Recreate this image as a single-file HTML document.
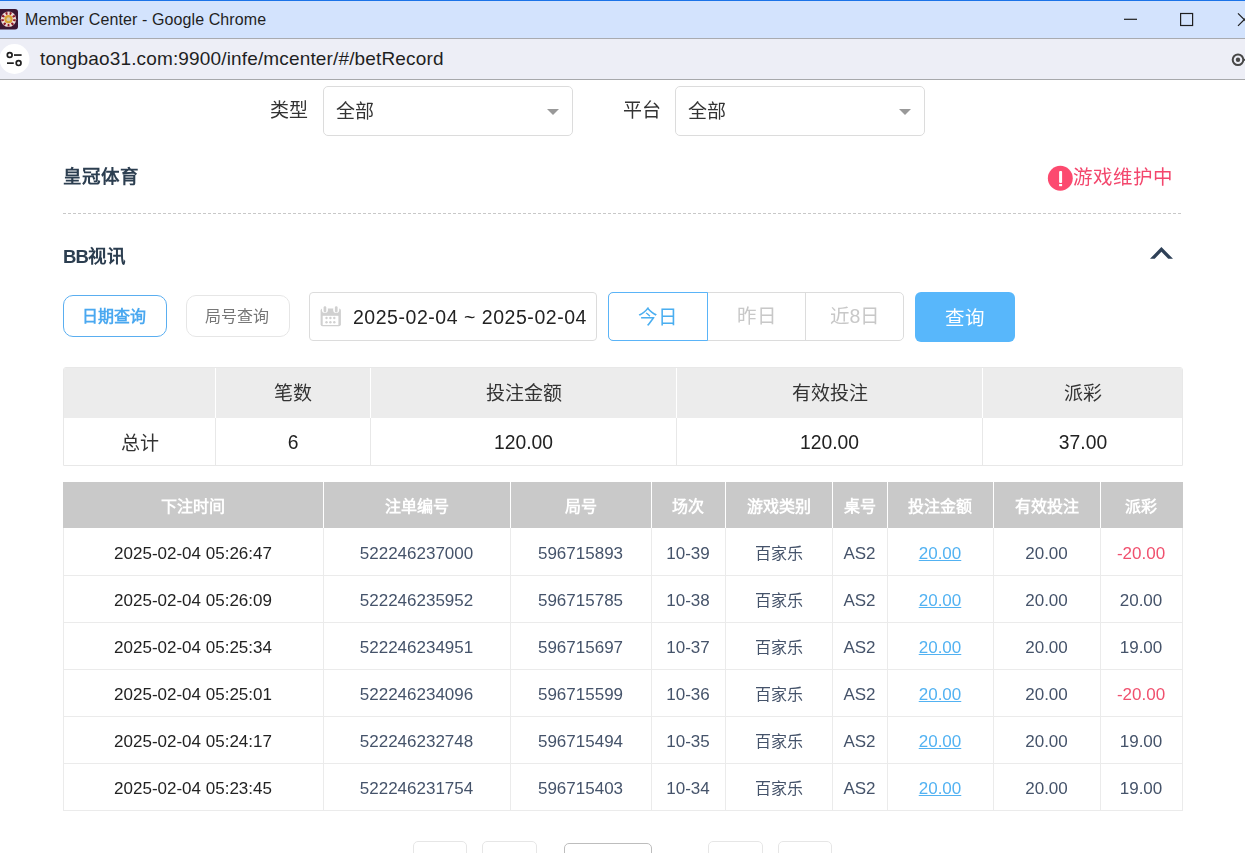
<!DOCTYPE html>
<html lang="zh-CN">
<head>
<meta charset="utf-8">
<style>
*{box-sizing:border-box;margin:0;padding:0}
html,body{width:1245px;height:853px;overflow:hidden;background:#fff;font-family:"Liberation Sans",sans-serif;color:#222}
.abs{position:absolute}
#title{position:absolute;left:0;top:0;width:1245px;height:39px;background:#d3e3fd;border-top:1px solid #1a73e8;border-bottom:1px solid #a9abb0}
#addr{position:absolute;left:0;top:39px;width:1245px;height:41px;background:#edeef6;border-bottom:1px solid #a7a8ab}
.t{position:absolute;white-space:nowrap;line-height:1}
#content{position:absolute;left:0;top:0;width:1245px;height:853px;will-change:transform}
.sel{position:absolute;top:86px;width:250px;height:50px;border:1px solid #dcdcdc;border-radius:5px}
.caret{position:absolute;width:0;height:0;border-left:6px solid transparent;border-right:6px solid transparent;border-top:6.5px solid #999}
.dash{position:absolute;left:63px;top:213px;width:1120px;height:1px;background:repeating-linear-gradient(90deg,#c8c8c8 0 3px,transparent 3px 5px)}
.btn{position:absolute;top:295px;height:42px;width:104px;border-radius:10px;text-align:center;line-height:42.5px;font-size:16px;padding-right:2px}
.seg{position:absolute;top:292px;height:49px;text-align:center;line-height:48px;font-size:19.5px;color:#c8c8c8}
.sum{position:absolute;left:63px;top:367px;width:1120px;height:99px;border:1px solid #e8e8e8;border-radius:3px 3px 0 0;overflow:hidden}
.sh{position:absolute;top:0;height:50px;line-height:51px;text-align:center;font-size:19px;color:#333}
.sd{position:absolute;top:50px;height:49px;line-height:50px;text-align:center;font-size:19.3px;color:#222}
.sd.cj{font-size:19px;line-height:51px;color:#333}
.th{position:absolute;top:482px;height:46px;line-height:49px;text-align:center;font-size:16px;font-weight:bold;color:#fff}
.td{position:absolute;height:47px;line-height:52px;text-align:center;font-size:17px;color:#45536a}
.td.c0{color:#222}
.td.lnk{color:#52b2f2;text-decoration:underline}
.td.neg{color:#f0506e}
.pg{position:absolute;top:841px;height:30px;border:1px solid #e6e6e6;border-radius:5px}
</style>
</head>
<body>
<div id="title">
  <svg class="abs" style="left:0;top:8px" width="19" height="21" viewBox="0 0 19 21">
    <rect x="-4" y="0" width="22" height="20.5" rx="3" fill="#3b1632"/>
    <circle cx="8.5" cy="10.2" r="7.7" fill="#ecdcd6"/>
    <circle cx="8.5" cy="10.2" r="6" fill="none" stroke="#901826" stroke-width="2.6" stroke-dasharray="1.9 2.2"/>
    <circle cx="8.5" cy="10.2" r="4.1" fill="#d9a232"/>
    <circle cx="8.5" cy="10.2" r="2" fill="#d6c8a6"/>
  </svg>
  <div class="t" style="left:25px;top:11px;font-size:16px;letter-spacing:0.1px;color:#1f1f1f">Member Center - Google Chrome</div>
  <svg class="abs" style="left:1120px;top:9px" width="125" height="19" viewBox="0 0 125 19">
    <rect x="4" y="8.7" width="13" height="1.2" fill="#1f1f1f"/>
    <rect x="60.6" y="3.5" width="12" height="12" fill="none" stroke="#1f1f1f" stroke-width="1.2"/>
    <path d="M118 3.3 L130.5 15.8 M118 15.8 L130.5 3.3" fill="none" stroke="#1f1f1f" stroke-width="1.2"/>
  </svg>
</div>
<div id="addr">
  <svg class="abs" style="left:0;top:5px" width="32" height="32" viewBox="0 0 32 32">
    <circle cx="14.5" cy="15" r="15" fill="#fff"/>
    <circle cx="9.7" cy="11" r="2.4" fill="none" stroke="#1f1f1f" stroke-width="1.7"/>
    <rect x="14" y="10.2" width="7.6" height="1.7" fill="#1f1f1f"/>
    <rect x="7" y="18.3" width="6.8" height="1.7" fill="#1f1f1f"/>
    <circle cx="18.6" cy="19.1" r="2.4" fill="none" stroke="#1f1f1f" stroke-width="1.7"/>
  </svg>
  <div class="t" style="left:40px;top:10px;font-size:19px;letter-spacing:0.15px;color:#1f1f1f">tongbao31.com:9900/infe/mcenter/#/betRecord</div>
  <svg class="abs" style="left:1228px;top:11px" width="17" height="20" viewBox="0 0 17 20">
    <circle cx="10" cy="9.8" r="5.3" fill="none" stroke="#474747" stroke-width="2"/>
    <circle cx="10" cy="9.8" r="2.2" fill="#474747"/>
    <rect x="15" y="8.8" width="3" height="2" fill="#474747"/>
  </svg>
</div>

<div id="content">
<div class="t" style="left:270px;top:101px;font-size:19px;color:#333">类型</div>
<div class="sel" style="left:323px"><div class="t" style="left:12px;top:15px;font-size:19px;color:#333">全部</div><div class="caret" style="left:223px;top:22px"></div></div>
<div class="t" style="left:622.5px;top:101px;font-size:19px;color:#333">平台</div>
<div class="sel" style="left:675px"><div class="t" style="left:12px;top:15px;font-size:19px;color:#333">全部</div><div class="caret" style="left:223px;top:22px"></div></div>

<div class="t" style="left:63px;top:167.5px;font-size:18.5px;font-weight:bold;color:#2c3e50">皇冠体育</div>
<svg class="abs" style="left:1044px;top:162px" width="32" height="32" viewBox="0 0 32 32">
  <circle cx="16.3" cy="16.3" r="12.45" fill="#fc4a6f"/>
  <rect x="15.1" y="9.1" width="3" height="12" rx="1" fill="#fff"/>
  <rect x="15.1" y="22" width="3" height="2.2" fill="#fff"/>
</svg>
<div class="t" style="left:1073px;top:168px;font-size:19.5px;color:#f3476d">游戏维护中</div>
<div class="dash"></div>

<div class="t" style="left:63px;top:247.5px;font-size:18.5px;font-weight:bold;color:#2c3e50"><span style="letter-spacing:-0.9px">BB</span>视讯</div>
<svg class="abs" style="left:1145px;top:240px" width="32" height="22" viewBox="0 0 32 22"><path d="M5 18.8 L16.4 7 L28 18.8 L23.2 18.8 L16.4 11.7 L9.7 18.8 Z" fill="#2e4057"/></svg>

<div class="btn" style="left:63px;border:1px solid #5aaef0;color:#4aa8f0;font-weight:bold">日期查询</div>
<div class="btn" style="left:186px;border:1px solid #e6e6e6;color:#777">局号查询</div>

<div class="abs" style="left:309px;top:292px;width:288px;height:49px;border:1px solid #dcdcdc;border-radius:4px"></div>
<svg class="abs" style="left:320px;top:306px" width="21" height="21" viewBox="0 0 21 21">
  <rect x="0.6" y="2.4" width="20.3" height="17.9" rx="2" fill="#d0d0d0"/>
  <rect x="2.7" y="9.8" width="15.7" height="9.2" fill="#fff"/>
  <rect x="1.9" y="0" width="6" height="7" rx="3" fill="#fff"/>
  <rect x="13.2" y="0" width="6" height="7" rx="3" fill="#fff"/>
  <rect x="3.6" y="0.2" width="2.7" height="6.2" rx="1.3" fill="#d0d0d0"/>
  <rect x="14.9" y="0.2" width="2.7" height="6.2" rx="1.3" fill="#d0d0d0"/>
  <g fill="#d0d0d0"><circle cx="6.5" cy="12" r="1.2"/><circle cx="10.4" cy="12" r="1.2"/><circle cx="14.3" cy="12" r="1.2"/><circle cx="6.5" cy="16.3" r="1.2"/><circle cx="10.4" cy="16.3" r="1.2"/><circle cx="14.3" cy="16.3" r="1.2"/></g>
</svg>
<div class="t" style="left:353px;top:308px;font-size:19.5px;letter-spacing:0.53px;color:#222">2025-02-04 ~ 2025-02-04</div>

<div class="abs" style="left:608px;top:292px;width:296px;height:49px;border:1px solid #dcdcdc;border-radius:5px"></div>
<div class="seg" style="left:608px;width:100px;border:1px solid #5ab4f8;border-radius:5px 0 0 5px;color:#4aaef0">今日</div>
<div class="seg" style="left:707px;width:99px">昨日</div>
<div class="abs" style="left:805px;top:292px;width:1px;height:49px;background:#dcdcdc"></div>
<div class="seg" style="left:806px;width:98px">近8日</div>
<div class="abs" style="left:915px;top:292px;width:100px;height:50px;border-radius:6px;background:#58b7fb;color:#fff;text-align:center;line-height:52px;font-size:19.5px">查询</div>

<div class="sum">
  <div class="abs" style="left:0;top:0;width:1120px;height:50px;background:#ececec"></div>
  <div class="abs" style="left:151px;top:0;width:1px;height:50px;background:#fff"></div>
  <div class="abs" style="left:306px;top:0;width:1px;height:50px;background:#fff"></div>
  <div class="abs" style="left:612px;top:0;width:1px;height:50px;background:#fff"></div>
  <div class="abs" style="left:918px;top:0;width:1px;height:50px;background:#fff"></div>
  <div class="abs" style="left:151px;top:50px;width:1px;height:49px;background:#e8e8e8"></div>
  <div class="abs" style="left:306px;top:50px;width:1px;height:49px;background:#e8e8e8"></div>
  <div class="abs" style="left:612px;top:50px;width:1px;height:49px;background:#e8e8e8"></div>
  <div class="abs" style="left:918px;top:50px;width:1px;height:49px;background:#e8e8e8"></div>
  <div class="sh" style="left:152px;width:154px">笔数</div>
  <div class="sh" style="left:307px;width:305px">投注金额</div>
  <div class="sh" style="left:613px;width:305px">有效投注</div>
  <div class="sh" style="left:919px;width:200px">派彩</div>
  <div class="sd cj" style="left:0;width:151px">总计</div>
  <div class="sd" style="left:152px;width:154px">6</div>
  <div class="sd" style="left:307px;width:305px">120.00</div>
  <div class="sd" style="left:613px;width:305px">120.00</div>
  <div class="sd" style="left:919px;width:200px">37.00</div>
</div>
<div class="abs" style="left:63px;top:482px;width:1120px;height:46px;background:#c9c9c9"></div>
<div class="th" style="left:63px;width:260px">下注时间</div>
<div class="th" style="left:323px;width:187px">注单编号</div>
<div class="th" style="left:510px;width:141px">局号</div>
<div class="th" style="left:651px;width:74px">场次</div>
<div class="th" style="left:725px;width:107px">游戏类别</div>
<div class="th" style="left:832px;width:55px">桌号</div>
<div class="th" style="left:887px;width:106px">投注金额</div>
<div class="th" style="left:993px;width:107px">有效投注</div>
<div class="th" style="left:1100px;width:82px">派彩</div>
<div class="abs" style="left:323px;top:482px;width:1px;height:46px;background:#fff"></div>
<div class="abs" style="left:510px;top:482px;width:1px;height:46px;background:#fff"></div>
<div class="abs" style="left:651px;top:482px;width:1px;height:46px;background:#fff"></div>
<div class="abs" style="left:725px;top:482px;width:1px;height:46px;background:#fff"></div>
<div class="abs" style="left:832px;top:482px;width:1px;height:46px;background:#fff"></div>
<div class="abs" style="left:887px;top:482px;width:1px;height:46px;background:#fff"></div>
<div class="abs" style="left:993px;top:482px;width:1px;height:46px;background:#fff"></div>
<div class="abs" style="left:1100px;top:482px;width:1px;height:46px;background:#fff"></div>
<div class="td c0" style="left:63px;top:528px;width:260px">2025-02-04 05:26:47</div>
<div class="td" style="left:323px;top:528px;width:187px">522246237000</div>
<div class="td" style="left:510px;top:528px;width:141px">596715893</div>
<div class="td" style="left:651px;top:528px;width:74px">10-39</div>
<div class="td" style="left:725px;top:528px;width:107px"><span style="font-size:16px">百家乐</span></div>
<div class="td" style="left:832px;top:528px;width:55px">AS2</div>
<div class="td lnk" style="left:887px;top:528px;width:106px">20.00</div>
<div class="td" style="left:993px;top:528px;width:107px">20.00</div>
<div class="td neg" style="left:1100px;top:528px;width:82px">-20.00</div>
<div class="abs" style="left:63px;top:575px;width:1120px;height:1px;background:#ebebeb"></div>
<div class="td c0" style="left:63px;top:575px;width:260px">2025-02-04 05:26:09</div>
<div class="td" style="left:323px;top:575px;width:187px">522246235952</div>
<div class="td" style="left:510px;top:575px;width:141px">596715785</div>
<div class="td" style="left:651px;top:575px;width:74px">10-38</div>
<div class="td" style="left:725px;top:575px;width:107px"><span style="font-size:16px">百家乐</span></div>
<div class="td" style="left:832px;top:575px;width:55px">AS2</div>
<div class="td lnk" style="left:887px;top:575px;width:106px">20.00</div>
<div class="td" style="left:993px;top:575px;width:107px">20.00</div>
<div class="td" style="left:1100px;top:575px;width:82px">20.00</div>
<div class="abs" style="left:63px;top:622px;width:1120px;height:1px;background:#ebebeb"></div>
<div class="td c0" style="left:63px;top:622px;width:260px">2025-02-04 05:25:34</div>
<div class="td" style="left:323px;top:622px;width:187px">522246234951</div>
<div class="td" style="left:510px;top:622px;width:141px">596715697</div>
<div class="td" style="left:651px;top:622px;width:74px">10-37</div>
<div class="td" style="left:725px;top:622px;width:107px"><span style="font-size:16px">百家乐</span></div>
<div class="td" style="left:832px;top:622px;width:55px">AS2</div>
<div class="td lnk" style="left:887px;top:622px;width:106px">20.00</div>
<div class="td" style="left:993px;top:622px;width:107px">20.00</div>
<div class="td" style="left:1100px;top:622px;width:82px">19.00</div>
<div class="abs" style="left:63px;top:669px;width:1120px;height:1px;background:#ebebeb"></div>
<div class="td c0" style="left:63px;top:669px;width:260px">2025-02-04 05:25:01</div>
<div class="td" style="left:323px;top:669px;width:187px">522246234096</div>
<div class="td" style="left:510px;top:669px;width:141px">596715599</div>
<div class="td" style="left:651px;top:669px;width:74px">10-36</div>
<div class="td" style="left:725px;top:669px;width:107px"><span style="font-size:16px">百家乐</span></div>
<div class="td" style="left:832px;top:669px;width:55px">AS2</div>
<div class="td lnk" style="left:887px;top:669px;width:106px">20.00</div>
<div class="td" style="left:993px;top:669px;width:107px">20.00</div>
<div class="td neg" style="left:1100px;top:669px;width:82px">-20.00</div>
<div class="abs" style="left:63px;top:716px;width:1120px;height:1px;background:#ebebeb"></div>
<div class="td c0" style="left:63px;top:716px;width:260px">2025-02-04 05:24:17</div>
<div class="td" style="left:323px;top:716px;width:187px">522246232748</div>
<div class="td" style="left:510px;top:716px;width:141px">596715494</div>
<div class="td" style="left:651px;top:716px;width:74px">10-35</div>
<div class="td" style="left:725px;top:716px;width:107px"><span style="font-size:16px">百家乐</span></div>
<div class="td" style="left:832px;top:716px;width:55px">AS2</div>
<div class="td lnk" style="left:887px;top:716px;width:106px">20.00</div>
<div class="td" style="left:993px;top:716px;width:107px">20.00</div>
<div class="td" style="left:1100px;top:716px;width:82px">19.00</div>
<div class="abs" style="left:63px;top:763px;width:1120px;height:1px;background:#ebebeb"></div>
<div class="td c0" style="left:63px;top:763px;width:260px">2025-02-04 05:23:45</div>
<div class="td" style="left:323px;top:763px;width:187px">522246231754</div>
<div class="td" style="left:510px;top:763px;width:141px">596715403</div>
<div class="td" style="left:651px;top:763px;width:74px">10-34</div>
<div class="td" style="left:725px;top:763px;width:107px"><span style="font-size:16px">百家乐</span></div>
<div class="td" style="left:832px;top:763px;width:55px">AS2</div>
<div class="td lnk" style="left:887px;top:763px;width:106px">20.00</div>
<div class="td" style="left:993px;top:763px;width:107px">20.00</div>
<div class="td" style="left:1100px;top:763px;width:82px">19.00</div>
<div class="abs" style="left:63px;top:810px;width:1120px;height:1px;background:#ebebeb"></div>
<div class="abs" style="left:63px;top:528px;width:1px;height:283px;background:#ebebeb"></div>
<div class="abs" style="left:323px;top:528px;width:1px;height:283px;background:#ebebeb"></div>
<div class="abs" style="left:510px;top:528px;width:1px;height:283px;background:#ebebeb"></div>
<div class="abs" style="left:651px;top:528px;width:1px;height:283px;background:#ebebeb"></div>
<div class="abs" style="left:725px;top:528px;width:1px;height:283px;background:#ebebeb"></div>
<div class="abs" style="left:832px;top:528px;width:1px;height:283px;background:#ebebeb"></div>
<div class="abs" style="left:887px;top:528px;width:1px;height:283px;background:#ebebeb"></div>
<div class="abs" style="left:993px;top:528px;width:1px;height:283px;background:#ebebeb"></div>
<div class="abs" style="left:1100px;top:528px;width:1px;height:283px;background:#ebebeb"></div>
<div class="abs" style="left:1182px;top:528px;width:1px;height:283px;background:#ebebeb"></div><div class="pg" style="left:413px;width:54px"></div>
<div class="pg" style="left:482px;width:55px"></div>
<div class="pg" style="left:564px;top:843px;width:88px;border-color:#bdbdbd"></div>
<div class="pg" style="left:708px;width:55px"></div>
<div class="pg" style="left:778px;width:54px"></div>
</div>
</body>
</html>
